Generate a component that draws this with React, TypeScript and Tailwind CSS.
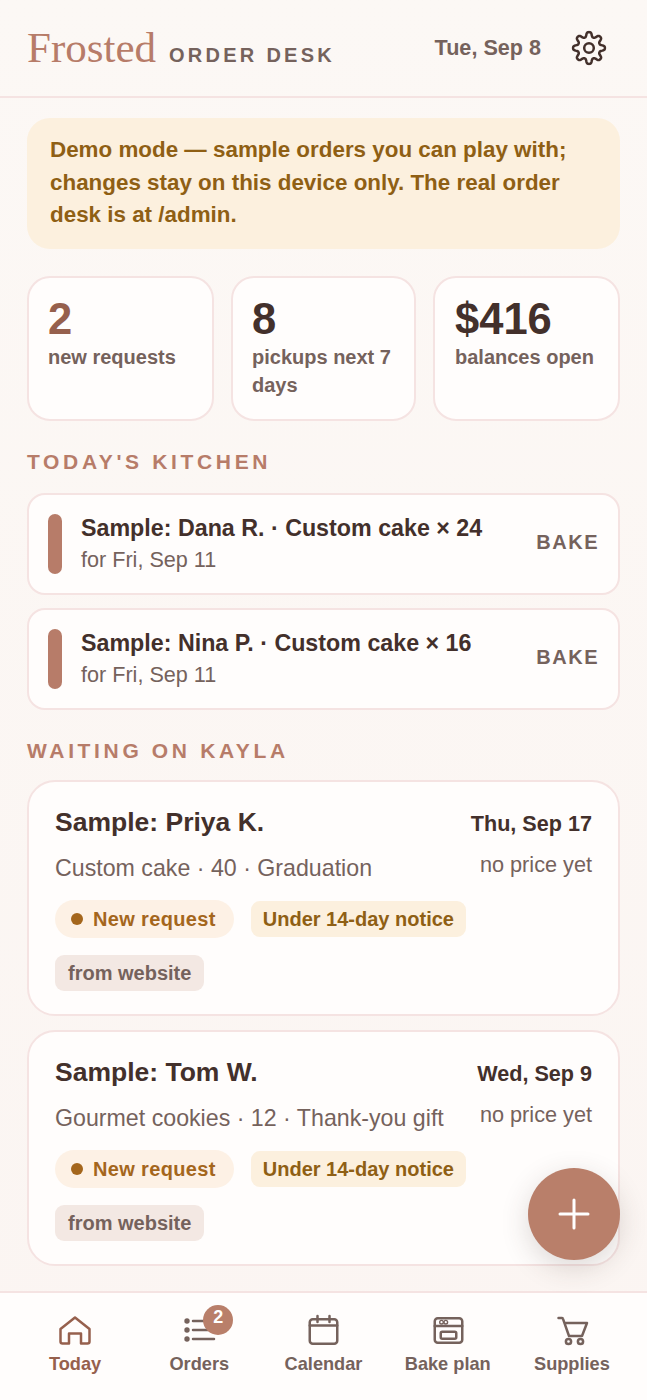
const gearPath = (() => {
  // wavy 8-tooth outline, sampled around the circle
  const pts: string[] = [];
  for (let i = 0; i < 160; i++) {
    const t = (i / 160) * Math.PI * 2;
    const r = 13.6 + 2.5 * Math.tanh(1.6 * Math.cos(8 * t));
    pts.push(`${(18 + r * Math.sin(t)).toFixed(2)} ${(18 - r * Math.cos(t)).toFixed(2)}`);
  }
  return `M${pts.join("L")}Z`;
})();

function GearIcon() {
  return (
    <svg width="36" height="36" viewBox="0 0 36 36" fill="none" stroke="currentColor" strokeWidth="2.5" strokeLinejoin="round" className="text-[#43302b]">
      <path d={gearPath} />
      <circle cx="18" cy="18" r="4.8" />
    </svg>
  );
}

function NavSvg({ children }: { children: React.ReactNode }) {
  return (
    <svg width="36" height="36" viewBox="0 0 36 36" fill="none" stroke="currentColor" strokeWidth="2.5" strokeLinecap="round" strokeLinejoin="round">
      {children}
    </svg>
  );
}

function Stat({ value, label, accent, last }: { value: string; label: string; accent?: boolean; last?: boolean }) {
  return (
    <div className={`rounded-[23px] border-2 border-[#f5e3e2] bg-[#fffdfc] pr-[19px] pt-[17px] h-[145px] ${last ? "pl-[20px]" : "pl-[19px]"}`}>
      <div className={`text-[43.5px] leading-[48px] font-bold ${accent ? "text-[#96604d]" : "text-[#43302b]"}`}>{value}</div>
      <div className="text-[20px] leading-[28px] font-bold text-[#75625c]">{label}</div>
    </div>
  );
}

function KitchenRow({ title }: { title: string }) {
  return (
    <div className="flex items-center rounded-[18px] border-2 border-[#f5e3e2] bg-[#fffdfc] px-[19px] h-[101.5px]">
      <div className="w-[14px] h-[60px] rounded-full bg-[#b77c69] shrink-0" />
      <div className="ml-[19px] flex-1">
        <div className="text-[23.25px] leading-[32px] font-bold text-[#43302b]">{title}</div>
        <div className="text-[21.6px] leading-[32px] text-[#75625c]">for Fri, Sep 11</div>
      </div>
      <div className="pb-[4px] text-[20px] font-bold tracking-[1.5px] text-[#75625c]">BAKE</div>
    </div>
  );
}

function OrderCard({ name, date, detail }: { name: string; date: string; detail: string }) {
  return (
    <div className="rounded-[28px] border-2 border-[#f5e3e2] bg-[#fffdfc] px-[26px] pt-[22px] h-[236px]">
      <div className="flex items-center justify-between h-[38px]">
        <div className="text-[26.5px] font-bold text-[#43302b]">{name}</div>
        <div className="text-[21.6px] font-bold text-[#43302b] pt-[3px]">{date}</div>
      </div>
      <div className="flex justify-between mt-[7px] h-[38px]">
        <div className="text-[23.2px] leading-[38px] text-[#75625c]">{detail}</div>
        <div className="text-[21.7px] leading-[32px] text-[#75625c]">no price yet</div>
      </div>
      <div className="flex flex-wrap gap-x-[17px] gap-y-[17px] mt-[13px] text-[20px] font-bold">
        <div className="flex items-center gap-[10px] h-[38px] rounded-full bg-[#fdf1e5] pl-[16px] pr-[18px] tracking-[0.35px] text-[#a4661c]">
          <span className="w-[12px] h-[12px] rounded-full bg-[#a4661c]" />
          New request
        </div>
        <div className="flex items-center h-[36px] mt-[1px] rounded-[9px] bg-[#fcf0de] px-[12px] text-[#8f5f14]">Under 14-day notice</div>
        <div className="flex items-center h-[36px] rounded-[9px] bg-[#f3e8e3] px-[13px] text-[#75625c]">from website</div>
      </div>
    </div>
  );
}

function NavItem({ label, active, children }: { label: string; active?: boolean; children: React.ReactNode }) {
  return (
    <div className={`flex-1 flex flex-col items-center ${active ? "text-[#96604d]" : "text-[#75625c]"}`}>
      <div className="relative h-[36px]">{children}</div>
      <div className="text-[18.2px] leading-[28px] font-bold mt-[1px]">{label}</div>
    </div>
  );
}

export default function App() {
  return (
    <div className="relative h-[1400px] overflow-hidden flex flex-col bg-linear-to-b from-[#fcf8f5] to-[#fbf5f2] font-['Liberation_Sans',sans-serif]">
      <header className="flex items-center justify-between h-[98px] shrink-0 border-b-2 border-[#f5e3e2] pl-[27px] pr-[40px]">
        <div className="flex items-baseline gap-[13px]">
          <span className="font-['Liberation_Serif',serif] text-[43px] text-[#b77c69]">Frosted</span>
          <span className="text-[20px] font-bold tracking-[3.27px] text-[#75625c]">ORDER DESK</span>
        </div>
        <div className="flex items-center gap-[30px]">
          <span className="text-[21.6px] font-bold text-[#75625c]">Tue, Sep 8</span>
          <GearIcon />
        </div>
      </header>

      <main className="flex-1 min-h-0 overflow-hidden px-[27px] pt-[20px]">
        <div className="rounded-[23px] bg-[#fcf0de] px-[23px] pt-[16px] h-[131px] text-[22.4px] leading-[32.5px] font-bold text-[#8f5f14]">
          Demo mode — sample orders you can play with; changes stay on this device only. The real order desk is at /admin.
        </div>

        <div className="grid grid-cols-[187px_185px_187px] gap-[17px] mt-[27px]">
          <Stat value="2" label="new requests" accent />
          <Stat value="8" label="pickups next 7 days" />
          <Stat value="$416" label="balances open" last />
        </div>

        <h2 className="mt-[26px] text-[21px] leading-[30px] font-bold tracking-[3.65px] text-[#b77c69]">TODAY'S KITCHEN</h2>
        <div className="flex flex-col gap-[13.5px] mt-[16px]">
          <KitchenRow title="Sample: Dana R. · Custom cake × 24" />
          <KitchenRow title="Sample: Nina P. · Custom cake × 16" />
        </div>

        <h2 className="mt-[26.5px] text-[21px] leading-[30px] font-bold tracking-[3.65px] text-[#b77c69]">WAITING ON KAYLA</h2>
        <div className="flex flex-col gap-[14px] mt-[13.5px]">
          <OrderCard name="Sample: Priya K." date="Thu, Sep 17" detail="Custom cake · 40 · Graduation" />
          <OrderCard name="Sample: Tom W." date="Wed, Sep 9" detail="Gourmet cookies · 12 · Thank-you gift" />
        </div>
      </main>

      <nav className="flex h-[109px] shrink-0 bg-[#fffdfc] border-t-2 border-[#f5e3e2] px-[13px] pt-[20px]">
        <NavItem label="Today" active>
          <NavSvg>
            <path d="M3.5 16 18 4.5 32.5 16v12.5a2 2 0 0 1-2 2H24V20.5H12v10H5.5a2 2 0 0 1-2-2Z" />
          </NavSvg>
        </NavItem>
        <NavItem label="Orders">
          <NavSvg>
            <circle cx="6" cy="8" r="2.7" fill="currentColor" stroke="none" />
            <circle cx="6" cy="17" r="2.7" fill="currentColor" stroke="none" />
            <circle cx="6" cy="26" r="2.7" fill="currentColor" stroke="none" />
            <path d="M12 8h21M12 17h21M12 26h21" />
          </NavSvg>
          <span className="absolute -top-[8px] left-[22px] w-[30px] h-[30px] pb-[5px] flex items-center justify-center rounded-full bg-[#b97f6a] text-white text-[18px] font-bold">2</span>
        </NavItem>
        <NavItem label="Calendar">
          <NavSvg>
            <rect x="3.75" y="6.25" width="27.5" height="24.5" rx="3" />
            <path d="M3.75 12.5h27.5M11.5 3v6M23.5 3v6" />
          </NavSvg>
        </NavItem>
        <NavItem label="Bake plan">
          <NavSvg>
            <rect x="4.75" y="5.25" width="27.5" height="24.5" rx="3" />
            <path d="M4.75 13h27.5" />
            <rect x="10.75" y="18.75" width="15.5" height="7" rx="1.5" />
            <circle cx="11.5" cy="9.2" r="1.8" strokeWidth="1.4" />
            <circle cx="15.8" cy="9.2" r="1.8" strokeWidth="1.4" />
          </NavSvg>
        </NavItem>
        <NavItem label="Supplies">
          <NavSvg>
            <path d="M4.5 5H8a1 1 0 0 1 1 .8L15 23h13l5-13H10.5" />
            <circle cx="14.5" cy="28.5" r="2.6" />
            <circle cx="26.5" cy="28.5" r="2.6" />
          </NavSvg>
        </NavItem>
      </nav>

      <button className="absolute left-[528px] top-[1168px] w-[92px] h-[92px] rounded-full bg-[#b97f6a] text-white flex items-center justify-center shadow-[0_8px_28px_rgba(67,48,43,0.18)]">
        <svg width="48" height="48" viewBox="0 0 24 24" fill="none" stroke="currentColor" strokeWidth="1.5" strokeLinecap="round">
          <path d="M5 12h14M12 5v14" />
        </svg>
      </button>
    </div>
  );
}
